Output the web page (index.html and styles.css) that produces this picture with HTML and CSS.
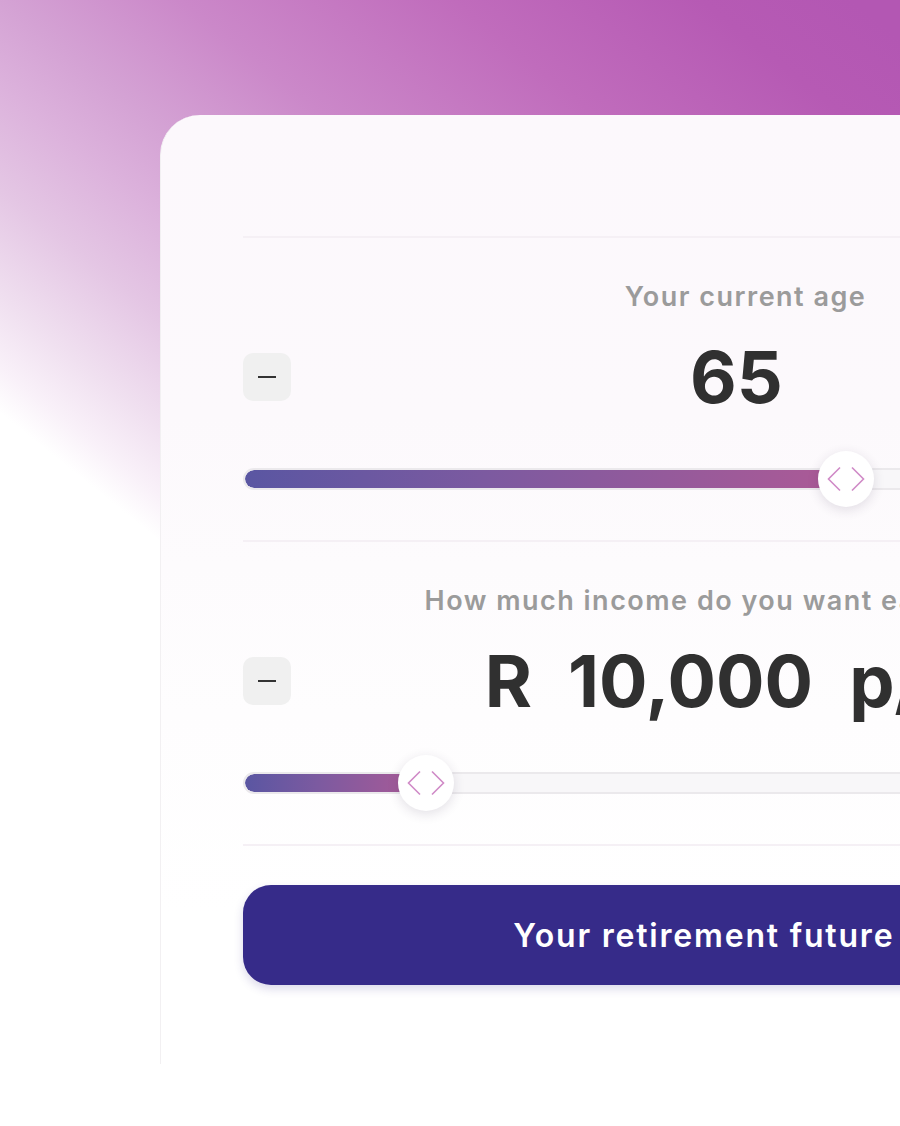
FILE: index.html
```html
<!DOCTYPE html>
<html lang="en">
<head>
    <meta charset="UTF-8">
    <meta name="viewport" content="width=device-width, initial-scale=1.0">
    <title>Retirement Calculator</title>
    <link rel="stylesheet" href="styles.css">
</head>
<body>

<main class="stage">
    <section class="card">

        <!-- Age -->
        <div class="field">
            <p class="field-label">Your current age</p>
            <div class="stepper">
                <button class="step-btn" aria-label="Decrease age">
                    <svg width="20" height="20" viewBox="0 0 20 20"><path d="M1 10h18" stroke="#333" stroke-width="2"/></svg>
                </button>
                <div class="value">65</div>
                <button class="step-btn" aria-label="Increase age">
                    <svg width="20" height="20" viewBox="0 0 20 20"><path d="M1 10h18M10 1v18" stroke="#333" stroke-width="2"/></svg>
                </button>
            </div>
            <div class="slider">
                <div class="track"><div class="fill" style="width: 60.04%"></div></div>
                <div class="thumb" style="left: 60.04%">
                    <svg width="56" height="56" viewBox="0 0 56 56"><path d="M22 16.5L10.5 28 22 39.5M34 16.5L45.5 28 34 39.5" fill="none" stroke="#d08ac7" stroke-width="1.6"/></svg>
                </div>
            </div>
        </div>

        <!-- Income -->
        <div class="field">
            <p class="field-label">How much income do you want each month?</p>
            <div class="stepper">
                <button class="step-btn" aria-label="Decrease income">
                    <svg width="20" height="20" viewBox="0 0 20 20"><path d="M1 10h18" stroke="#333" stroke-width="2"/></svg>
                </button>
                <div class="value">
                    <span>R</span>
                    <span>10,000</span>
                    <span>p/m</span>
                </div>
                <button class="step-btn" aria-label="Increase income">
                    <svg width="20" height="20" viewBox="0 0 20 20"><path d="M1 10h18M10 1v18" stroke="#333" stroke-width="2"/></svg>
                </button>
            </div>
            <div class="slider">
                <div class="track"><div class="fill" style="width: 18.19%"></div></div>
                <div class="thumb" style="left: 18.19%">
                    <svg width="56" height="56" viewBox="0 0 56 56"><path d="M22 16.5L10.5 28 22 39.5M34 16.5L45.5 28 34 39.5" fill="none" stroke="#d08ac7" stroke-width="1.6"/></svg>
                </div>
            </div>
        </div>

        <div class="cta-wrap">
            <button class="cta">Your retirement future plan</button>
        </div>

    </section>
</main>

</body>
</html>
```

FILE: styles.css
```css
html, body {
    margin: 0;
    overflow: hidden;
    background-color: #fff;
}
body {
    font-family: Inter, "Open Sans", sans-serif;
}
.stage {
    box-sizing: border-box;
    height: 1126px;
    padding: 115px 0 0 160px;
    overflow: hidden;
    background:
        linear-gradient(180deg, rgba(255, 255, 255, 0) 900px, #fff 1040px),
        linear-gradient(218.7deg,
            #b357b3 30px,
            #b65ab4 125px,
            #c06cbc 280px,
            #cb88c9 450px,
            #d4a2d4 560px,
            #dcb2dc 630px,
            #e4c6e4 710px,
            #f0e0f0 796px,
            #f9f1f9 850px,
            #ffffff 885px);
}
.card {
    box-sizing: border-box;
    width: 1170px;
    padding: 121px 82px 79px;
    border-radius: 40px 40px 0 0;
    border-left: 1px solid #f2f0f2;
    background: linear-gradient(180deg, #fcf8fc 0, #fcf9fc 300px, #fefdfe 600px, #fff 800px);
}
.field {
    border-top: 2px solid #f5f0f5;
    padding: 43px 0 33px;
}
.field-label {
    margin: 0;
    height: 32px;
    line-height: 32px;
    font-size: 27px;
    font-weight: 600;
    letter-spacing: 1.5px;
    color: #9b9b9b;
    text-align: center;
    white-space: nowrap;
}
.stepper {
    display: flex;
    align-items: center;
    margin-top: 28px;
    height: 72px;
}
.step-btn {
    display: flex;
    align-items: center;
    justify-content: center;
    flex: none;
    width: 48px;
    height: 48px;
    padding: 0;
    border: none;
    border-radius: 10px;
    background-color: #f0f0f0;
    cursor: pointer;
}
.value {
    flex: 1;
    display: flex;
    justify-content: center;
    gap: 36px;
    padding-right: 18px;
    font-size: 72px;
    line-height: 72px;
    font-weight: 700;
    color: #303030;
    white-space: nowrap;
}
.slider {
    position: relative;
    margin-top: 38px;
    height: 56px;
}
.track {
    position: absolute;
    left: 0;
    right: 0;
    top: 17px;
    height: 22px;
    box-sizing: border-box;
    border: 2px solid #ebe9ec;
    border-radius: 11px;
    background-color: #f8f7f9;
    overflow: hidden;
}
.fill {
    height: 100%;
    border-radius: 9px 0 0 9px;
    background: linear-gradient(90deg, #5a56a2, #7c5aa0 40%, #ad5a96);
}
.thumb {
    position: absolute;
    top: 0;
    width: 56px;
    height: 56px;
    margin-left: -28px;
    border-radius: 50%;
    background-color: #fff;
    box-shadow: 0 3px 12px rgba(60, 40, 80, 0.14);
}
.thumb svg {
    display: block;
}
.cta-wrap {
    border-top: 2px solid #f5f0f5;
    padding-top: 39px;
}
.cta {
    display: block;
    width: 100%;
    height: 100px;
    border: none;
    border-radius: 28px;
    background-color: #362b89;
    color: #fff;
    font-family: inherit;
    font-size: 32px;
    font-weight: 600;
    letter-spacing: 1.8px;
    box-shadow: 0 4px 10px rgba(54, 43, 137, 0.18);
    cursor: pointer;
}
```
